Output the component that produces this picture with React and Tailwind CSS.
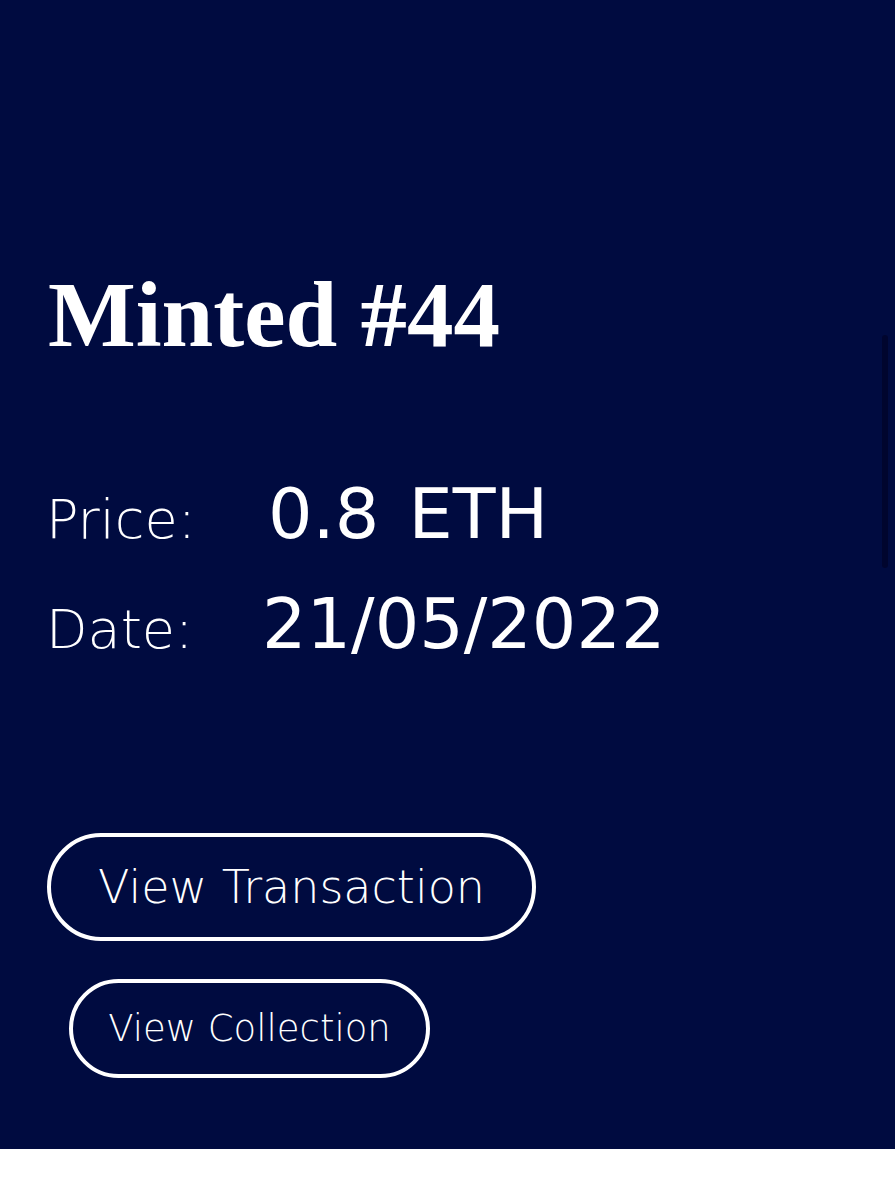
import React from 'react';

const sans = { fontFamily: '"DejaVu Sans", "Open Sans", sans-serif' };

const Row = ({ label, value, labelWidth }) => (
    <div className="flex items-baseline leading-none" style={sans}>
        <span className={`text-[54px] font-extralight -ml-[2px] ${labelWidth}`}>{label}</span>
        <span className="text-[70px] font-normal [word-spacing:0.1em]">{value}</span>
    </div>
);

const App = () => {
    return (
        <div className="w-[895px] h-[1200px] bg-white">
            <div className="relative bg-[#000b40] text-white pl-[48px] pt-[268px] pb-[71px]">
                {/* Title */}
                <h1
                    className="text-[93px] font-bold leading-none"
                    style={{ fontFamily: '"Liberation Serif", "DejaVu Serif", serif' }}
                >
                    Minted #44
                </h1>

                {/* Details */}
                <div className="mt-[118px] flex flex-col gap-[40px]">
                    <Row label="Price:" value="0.8 ETH" labelWidth="w-[222px]" />
                    <Row label="Date:" value="21/05/2022" labelWidth="w-[216px]" />
                </div>

                {/* Actions */}
                <div className="mt-[174px] flex flex-col items-start gap-[38px]">
                    <button
                        className="-ml-[1px] w-[489px] h-[108px] rounded-full border-[4px] border-white flex items-center justify-center text-[46px] font-extralight"
                        style={sans}
                    >
                        View Transaction
                    </button>
                    <button
                        className="ml-[21px] w-[361px] h-[99px] rounded-full border-[4px] border-white flex items-center justify-center text-[37px] font-extralight"
                        style={sans}
                    >
                        View Collection
                    </button>
                </div>

                {/* scroll indicator */}
                <div className="absolute right-[7px] top-[335px] w-[6px] h-[233px] rounded-full bg-[#00052e]" />
            </div>
        </div>
    );
};

export default App;
